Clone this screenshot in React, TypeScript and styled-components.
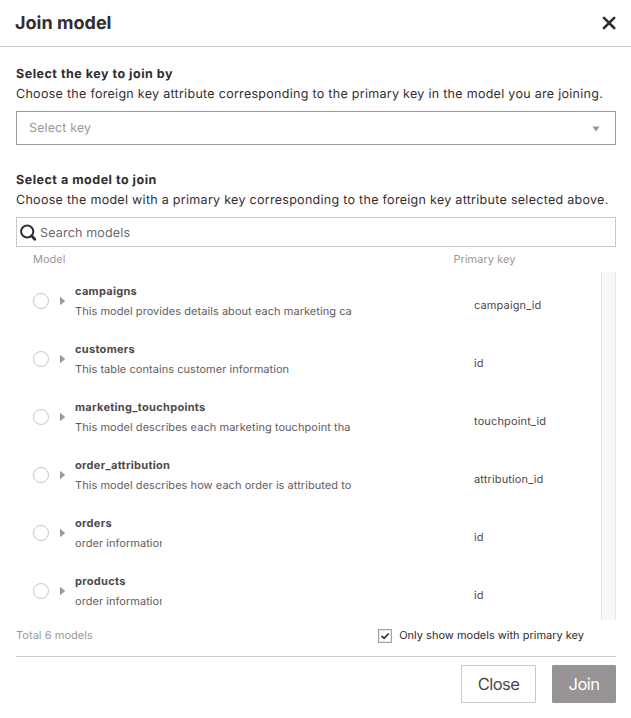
import React, { useState } from 'react';
import styled, { createGlobalStyle } from 'styled-components';

const GlobalStyle = createGlobalStyle`
  *, *::before, *::after { box-sizing: border-box; }
  body {
    margin: 0;
    background: #fff;
    color: #322d30;
    font-family: Inter, "Liberation Sans", sans-serif;
    text-rendering: geometricPrecision;
    overflow: hidden;
  }
`;

const Dialog = styled.div`
  width: 631px;
  height: 718px;
  display: flex;
  flex-direction: column;
  background: #fff;
`;

const Header = styled.header`
  height: 47px;
  flex: none;
  display: flex;
  align-items: center;
  justify-content: space-between;
  padding: 0 15px;
  border-bottom: 1px solid #cfcdce;
`;

const Title = styled.h1`
  margin: 0;
  padding-top: 1px;
  font-size: 18px;
  line-height: 24px;
  font-weight: 700;
  letter-spacing: 0.02px;
`;

const IconButton = styled.button`
  display: flex;
  padding: 0;
  border: 0;
  background: none;
  color: #322d30;
`;

const Body = styled.main`
  display: flex;
  flex-direction: column;
  padding: 18px 15px 0 16px;
`;

const Section = styled.section<{ $gap: number }>`
  display: flex;
  flex-direction: column;
  margin-bottom: ${(p) => p.$gap}px;
`;

const SectionTitle = styled.h2`
  margin: 0;
  font-size: 12.5px;
  line-height: 20px;
  font-weight: 700;
  letter-spacing: 0.51px;
`;

const SectionText = styled.p`
  margin: 0 0 6px;
  font-size: 12.5px;
  line-height: 20px;
  white-space: nowrap;
  letter-spacing: 0.29px;
`;

const Select = styled.div`
  height: 34px;
  display: flex;
  align-items: center;
  justify-content: space-between;
  padding: 2px 15px 0 12px;
  border: 1px solid #9c9899;
  color: #9c9899;
  font-size: 12.5px;
  line-height: 20px;
  letter-spacing: 0.12px;
`;

const SearchBox = styled.label`
  height: 30px;
  display: flex;
  align-items: center;
  padding-left: 3px;
  border: 1px solid #cbcacb;
`;

const SearchInput = styled.input`
  flex: 1;
  padding: 2px 0 0;
  margin-left: 3px;
  border: 0;
  outline: 0;
  background: none;
  font: 400 12.5px Inter, sans-serif;
  letter-spacing: 0.17px;
  text-rendering: geometricPrecision;
  &::placeholder { color: #6d696b; opacity: 1; }
`;

const TableHead = styled.div`
  height: 25px;
  display: grid;
  grid-template-columns: 420.5px 1fr;
  padding-left: 17px;
  font-size: 11px;
  line-height: 25px;
  letter-spacing: 0.03px;
  color: #9c9899;
`;

const TableFrame = styled.div`
  height: 348px;
  display: flex;
`;

const Rows = styled.div`
  flex: 1;
  min-width: 0;
`;

const ScrollTrack = styled.div`
  width: 15px;
  border: solid #e6e6e6;
  border-width: 0 1px;
  background: #f8f8f8;
`;

const Row = styled.div`
  height: 58px;
  display: grid;
  grid-template-columns: 27px 15px 399px 1fr;
  align-items: center;
  padding-left: 17px;
`;

const Radio = styled.span`
  width: 16px;
  height: 16px;
  border: 1px solid #c9c7c8;
  border-radius: 50%;
`;

const ModelCell = styled.div`
  display: flex;
  flex-direction: column;
`;

const ModelName = styled.span`
  font-size: 11px;
  line-height: 20px;
  font-weight: 700;
  letter-spacing: 0.3px;
  color: #4d494b;
`;

const ModelText = styled.span<{ $width: number }>`
  width: ${(p) => p.$width}px;
  overflow: hidden;
  white-space: nowrap;
  font-size: 11px;
  line-height: 20px;
  letter-spacing: 0.05px;
  color: #615d5f;
`;

const KeyCell = styled.span`
  padding-top: 8px;
  font-size: 11px;
  line-height: 20px;
  letter-spacing: 0.14px;
  color: #4d494b;
`;

const Summary = styled.div`
  height: 37px;
  display: flex;
  align-items: center;
  justify-content: space-between;
  padding: 0 32px 6px 0;
  border-bottom: 1px solid #cfcdce;
  font-size: 11px;
  letter-spacing: 0.05px;
`;

const Total = styled.span`
  color: #9c9899;
`;

const CheckLabel = styled.label`
  display: flex;
  align-items: center;
  gap: 7px;
  letter-spacing: 0;
`;

const CheckBox = styled.span`
  width: 14px;
  height: 14px;
  margin-top: 1px;
  display: flex;
  border: 1px solid #a5a2a3;
  box-shadow: inset 0 0 0 1px #e8e7e7;
`;

const Footer = styled.footer`
  display: flex;
  justify-content: flex-end;
  gap: 16px;
  padding-top: 8px;
`;

const Button = styled.button<{ $primary?: boolean }>`
  width: ${(p) => (p.$primary ? 64 : 75)}px;
  height: 38px;
  padding: 0 0 1px;
  border: 1px solid ${(p) => (p.$primary ? '#989495' : '#cbcacb')};
  border-radius: 1px;
  background: ${(p) => (p.$primary ? '#989495' : '#fff')};
  color: ${(p) => (p.$primary ? '#fff' : '#4d494b')};
  font: 400 16.5px Inter, sans-serif;
  letter-spacing: -0.55px;
  text-rendering: geometricPrecision;
`;

interface Model {
  name: string;
  text: string;
  width: number;
  primaryKey: string;
}

const models: Model[] = [
  { name: 'campaigns', text: 'This model provides details about each marketing ca', width: 277, primaryKey: 'campaign_id' },
  { name: 'customers', text: 'This table contains customer information', width: 276, primaryKey: 'id' },
  { name: 'marketing_touchpoints', text: 'This model describes each marketing touchpoint tha', width: 276, primaryKey: 'touchpoint_id' },
  { name: 'order_attribution', text: 'This model describes how each order is attributed to', width: 280, primaryKey: 'attribution_id' },
  { name: 'orders', text: 'order information', width: 87, primaryKey: 'id' },
  { name: 'products', text: 'order information', width: 87, primaryKey: 'id' },
];

const CloseIcon = () => (
  <svg width="14" height="14" viewBox="0 0 14 14" fill="none" stroke="currentColor" strokeWidth="2.6" strokeLinecap="round">
    <path d="M2 1.8l10.2 10.2M12.2 1.8L2 12" />
  </svg>
);

const SearchIcon = () => (
  <svg width="17" height="17" viewBox="0 0 17 17" fill="none" stroke="#322d30">
    <circle cx="7.2" cy="7.5" r="6.1" strokeWidth="2" />
    <path d="M11.6 11.8l3.2 3.4" strokeWidth="2.8" strokeLinecap="round" />
  </svg>
);

const CaretDown = () => (
  <svg width="8" height="6" viewBox="0 0 8 6" fill="#9c9899">
    <path d="M0.3 0.5h7.4L4 5.6z" />
  </svg>
);

const CaretRight = () => (
  <svg width="6" height="10" viewBox="0 0 6 10" fill="#9c9899">
    <path d="M0 0.8L5.2 5 0 9.2z" />
  </svg>
);

const CheckIcon = () => (
  <svg width="12" height="12" viewBox="0 0 12 12" fill="none" stroke="#322d30" strokeWidth="1.8">
    <path d="M2.5 5.8l2.6 2.5 4.6-4.8" />
  </svg>
);

export default function App() {
  const [query, setQuery] = useState('');
  const visible = models.filter((m) => m.name.includes(query));

  return (
    <>
      <GlobalStyle />
      <Dialog>
        <Header>
          <Title>Join model</Title>
          <IconButton aria-label="Close dialog">
            <CloseIcon />
          </IconButton>
        </Header>
        <Body>
          <Section $gap={26}>
            <SectionTitle>Select the key to join by</SectionTitle>
            <SectionText>
              Choose the foreign key attribute corresponding to the primary key in the model you are joining.
            </SectionText>
            <Select>
              <span>Select key</span>
              <CaretDown />
            </Select>
          </Section>
          <Section $gap={0}>
            <SectionTitle>Select a model to join</SectionTitle>
            <SectionText>
              Choose the model with a primary key corresponding to the foreign key attribute selected above.
            </SectionText>
            <SearchBox>
              <SearchIcon />
              <SearchInput placeholder="Search models" value={query} onChange={(e) => setQuery(e.target.value)} />
            </SearchBox>
            <TableHead>
              <span>Model</span>
              <span>Primary key</span>
            </TableHead>
            <TableFrame>
              <Rows>
                {visible.map((m) => (
                  <Row key={m.name}>
                    <Radio />
                    <CaretRight />
                    <ModelCell>
                      <ModelName>{m.name}</ModelName>
                      <ModelText $width={m.width}>{m.text}</ModelText>
                    </ModelCell>
                    <KeyCell>{m.primaryKey}</KeyCell>
                  </Row>
                ))}
              </Rows>
              <ScrollTrack />
            </TableFrame>
            <Summary>
              <Total>Total {models.length} models</Total>
              <CheckLabel>
                <CheckBox>
                  <CheckIcon />
                </CheckBox>
                Only show models with primary key
              </CheckLabel>
            </Summary>
          </Section>
          <Footer>
            <Button>Close</Button>
            <Button $primary>Join</Button>
          </Footer>
        </Body>
      </Dialog>
    </>
  );
}
